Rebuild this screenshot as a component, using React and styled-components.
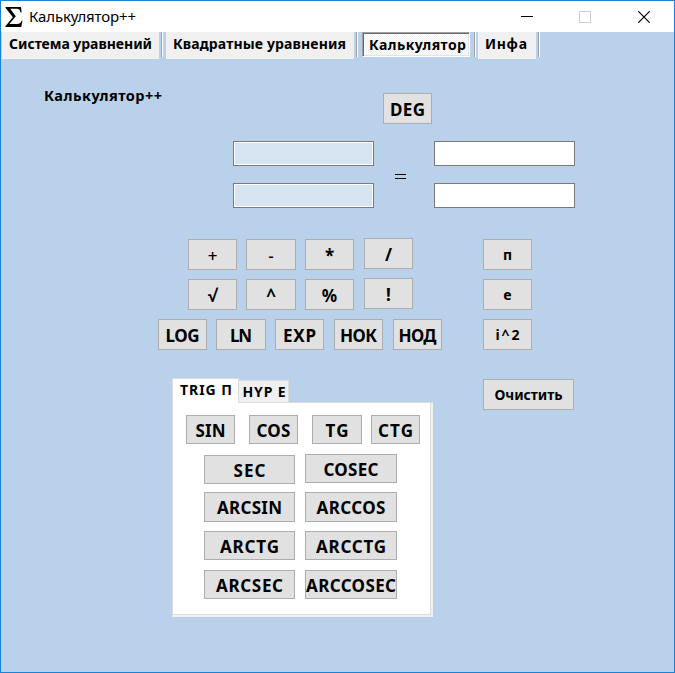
import React, { useLayoutEffect, useRef } from "react";
import styled, { createGlobalStyle, css } from "styled-components";

const GlobalStyle = createGlobalStyle`
  * { box-sizing: border-box; }
  html, body { margin: 0; padding: 0; }
  body { font-family: "Noto Sans", "Open Sans", sans-serif; color: #000; }
  button { font-family: inherit; color: inherit; }
`;

const Window = styled.div`
  width: 675px;
  height: 673px;
  display: flex;
  flex-direction: column;
  border: 1px solid #1883d7;
  background: #b9d1ea;
  overflow: hidden;
`;

const TitleBar = styled.header`
  flex: none;
  height: 31px;
  display: flex;
  align-items: center;
  padding-left: 4px;
  background: #fff;
`;

const Title = styled.div`
  flex: 1;
  display: flex;
  margin-left: 6px;
  font-size: 15px;
  line-height: 20px;
  padding-bottom: 1px;
`;

const WindowButton = styled.div`
  width: ${(p) => p.$w || 58}px;
  height: 30px;
  display: flex;
  align-items: center;
  justify-content: center;
`;

const TabStrip = styled.nav`
  flex: none;
  height: 27px;
  display: flex;
  align-items: flex-start;
  padding-left: 1px;
`;

const Tab = styled.div`
  width: ${(p) => p.$w}px;
  height: 27px;
  display: flex;
  padding-left: 7px;
  background: #f0f0f0;
  font-size: 14px;
  font-weight: 700;
  line-height: 23px;
  ${(p) =>
    p.$active &&
    css`
      height: 25px;
      padding-left: 6px;
      line-height: 23px;
      border: 1px solid;
      border-color: #a0a0a0 #fff #fff #a0a0a0;
      box-shadow: inset 1px 1px #696969, inset -1px -1px #e3e3e3;
      background: repeating-conic-gradient(#fff 0 25%, #f0f0f0 0 50%) 0 0 / 2px 2px;
    `}
`;

const Separator = styled.div`
  width: 2px;
  height: 25px;
  margin: 0 ${(p) => p.$after}px 0 ${(p) => p.$before}px;
  border-left: 1px solid #a0a0a0;
  border-right: 1px solid #fff;
`;

const FitText = styled.span`
  display: inline-block;
  white-space: pre;
`;

const Content = styled.main`
  flex: 1;
  display: flex;
  flex-direction: column;
`;

const Header = styled.section`
  display: flex;
  height: 82px;
`;

const Heading = styled.h1`
  width: 339px;
  margin: 26px 0 0 43px;
  font-size: 14.5px;
  line-height: 20px;
  font-weight: 700;
`;

const Fields = styled.section`
  display: grid;
  grid-template-columns: 141px 60px 141px;
  grid-template-rows: 25px 25px;
  row-gap: 17px;
  padding-left: 232px;
`;

const Field = styled.input`
  width: 141px;
  height: 25px;
  padding: 1px;
  border: 1px solid #7a7a7a;
  border-radius: 0;
  outline: 0;
  background: #fff;
  &:disabled {
    background: #d7e4f2;
    box-shadow: inset 0 0 0 1px #fff;
  }
`;

const Equals = styled.div`
  grid-column: 2;
  grid-row: 1 / 3;
  display: flex;
  align-items: center;
  padding: 4px 0 0 21px;
`;

const Key = styled.button`
  flex: none;
  width: ${(p) => p.$w || 49}px;
  height: ${(p) => p.$h || 31}px;
  margin: ${(p) => p.$top || 0}px 0 0;
  padding: ${(p) => (p.$size ? 0 : 2)}px 0 0;
  display: flex;
  align-items: center;
  justify-content: center;
  border: 1px solid #adadad;
  background: #e1e1e1;
  font-size: ${(p) => p.$size || 17}px;
  line-height: 20px;
  font-weight: ${(p) => p.$weight || 700};
`;

const Keypad = styled.section`
  display: flex;
  flex-direction: column;
  gap: 9px;
  height: 140px;
  margin-top: 31px;
`;

const KeyRow = styled.div`
  display: flex;
  align-items: flex-start;
  height: 31px;
  padding-left: ${(p) => p.$left}px;
`;

const Gap = styled.div`
  flex: none;
  width: ${(p) => p.$w}px;
`;

const Lower = styled.section`
  display: flex;
  align-items: flex-start;
  gap: 50px;
  margin: -1px 0 0 171px;
`;

const TrigGroup = styled.div`
  width: 261px;
`;

const GroupTabs = styled.div`
  display: flex;
  align-items: flex-end;
  height: 24px;
`;

const GroupTab = styled.div`
  width: ${(p) => (p.$active ? 67 : 50)}px;
  height: ${(p) => (p.$active ? 25 : 22)}px;
  margin-bottom: ${(p) => (p.$active ? -1 : 0)}px;
  position: relative;
  display: flex;
  justify-content: ${(p) => (p.$active ? "flex-start" : "center")};
  padding-left: ${(p) => (p.$active ? 7 : 1)}px;
  border: 1px solid #dcdcdc;
  border-bottom: 0;
  border-left-width: ${(p) => (p.$active ? 1 : 0)}px;
  background: ${(p) => (p.$active ? "#fff" : "#f0f0f0")};
  font-size: 14px;
  font-weight: 700;
  line-height: ${(p) => (p.$active ? 22 : 22)}px;
`;

const GroupPanel = styled.div`
  width: 261px;
  height: 215px;
  border: 1px solid;
  border-color: #dcdcdc #f0f0f0 #f0f0f0 #dcdcdc;
  background: #fff;
  padding: 12px 0 0 13px;
  box-shadow: inset -1px -1px #f0f0f0, inset -2px -2px #dcdcdc;
`;

const TrigRow = styled.div`
  display: flex;
  align-items: flex-start;
  height: ${(p) => p.$h}px;
  padding-left: ${(p) => p.$left || 0}px;
`;

/* Adjusts tracking so the label occupies the given width. */
function Fit({ text, width }) {
  const ref = useRef(null);
  useLayoutEffect(() => {
    const el = ref.current;
    el.style.letterSpacing = "0px";
    el.style.marginRight = "0px";
    const natural = el.getBoundingClientRect().width;
    const spacing = width ? (width - natural) / Math.max(1, text.length - 1) : 0;
    el.style.letterSpacing = `${spacing}px`;
    el.style.marginRight = `${-spacing}px`;
  }, [text, width]);
  return <FitText ref={ref}>{text}</FitText>;
}

const Cap = ({ text, fit, w, h, top, size, weight }) => (
  <Key type="button" $w={w} $h={h} $top={top} $size={size} $weight={weight}>
    <Fit text={text} width={fit} />
  </Key>
);

const SigmaIcon = () => (
  <svg width="18" height="22" viewBox="0 0 18 22">
    <path
      d="M.5 1H16l.6 5.5h-1C15 3.8 14 2.8 11.800 2.800H5.200l5.600 7.500-6.400 7.700h7.600c2.500 0 3.700-1 4.600-3.300h.9L16.200 21H.4v-.8l7.400-8.900L.5 1.800z"
      fill="#000"
    />
  </svg>
);

export default function App() {
  return (
    <>
      <GlobalStyle />
      <Window>
        <TitleBar>
          <SigmaIcon />
          <Title>
            <Fit text="Калькулятор++" width={107} />
          </Title>
          <WindowButton>
            <svg width="12" height="12" shapeRendering="crispEdges">
              <path d="M0 5.500h12" stroke="#000" />
            </svg>
          </WindowButton>
          <WindowButton>
            <svg width="12" height="12" shapeRendering="crispEdges">
              <rect x=".5" y=".5" width="11" height="11" fill="none" stroke="#ccc" />
            </svg>
          </WindowButton>
          <WindowButton $w={60}>
            <svg width="12" height="12">
              <path d="M.3.3l11.400 11.400M11.700.3L.3 11.700" stroke="#000" strokeWidth="1.200" />
            </svg>
          </WindowButton>
        </TitleBar>
        <TabStrip>
          <Tab $w={157}><Fit text="Система уравнений" width={143} /></Tab>
          <Separator $before={2} $after={3} />
          <Tab $w={188}><Fit text="Квадратные уравнения" width={173} /></Tab>
          <Separator $before={2} $after={4} />
          <Tab $w={108} $active><Fit text="Калькулятор" width={97} /></Tab>
          <Separator $before={4} $after={2} />
          <Tab $w={58}><Fit text="Инфа" width={42} /></Tab>
          <Separator $before={2} $after={0} />
        </TabStrip>
        <Content>
          <Header>
            <Heading><Fit text="Калькулятор++" width={118} /></Heading>
            <Cap text="DEG" fit={35} top={34} />
          </Header>
          <Fields>
            <Field disabled />
            <Equals>
              <svg width="11" height="5" shapeRendering="crispEdges">
                <path d="M0 .5h11M0 4.500h11" stroke="#000" />
              </svg>
            </Equals>
            <Field />
            <Field disabled />
            <Field />
          </Fields>
          <Keypad>
            <KeyRow $left={187}>
              <Cap text="+" weight={500} /><Gap $w={9} />
              <Cap text="-" w={50} weight={500} /><Gap $w={9} />
              <Cap text="*" /><Gap $w={10} />
              <Cap text="/" top={-1} /><Gap $w={70} />
              <Cap text="п" size={14} />
            </KeyRow>
            <KeyRow $left={187}>
              <Cap text="√" /><Gap $w={9} />
              <Cap text="^" w={50} /><Gap $w={9} />
              <Cap text="%" fit={18} /><Gap $w={10} />
              <Cap text="!" top={-1} /><Gap $w={70} />
              <Cap text="e" size={14} />
            </KeyRow>
            <KeyRow $left={157}>
              <Cap text="LOG" fit={34} /><Gap $w={9} />
              <Cap text="LN" w={50} fit={22} /><Gap $w={9} />
              <Cap text="EXP" fit={33} /><Gap $w={10} />
              <Cap text="НОК" fit={37} /><Gap $w={10} />
              <Cap text="НОД" fit={38} /><Gap $w={41} />
              <Cap text="i^2" fit={24} size={14} />
            </KeyRow>
          </Keypad>
          <Lower>
            <TrigGroup>
              <GroupTabs>
                <GroupTab $active><Fit text="TRIG П" width={52} /></GroupTab>
                <GroupTab><Fit text="HYP E" width={43} /></GroupTab>
              </GroupTabs>
              <GroupPanel>
                <TrigRow $h={40}>
                  <Cap text="SIN" h={29} fit={30} /><Gap $w={14} />
                  <Cap text="COS" h={29} fit={34} /><Gap $w={14} />
                  <Cap text="TG" w={50} h={29} fit={23} /><Gap $w={9} />
                  <Cap text="CTG" h={29} fit={35} />
                </TrigRow>
                <TrigRow $h={37} $left={18}>
                  <Cap text="SEC" w={91} h={29} fit={32} /><Gap $w={10} />
                  <Cap text="COSEC" w={92} h={29} top={-1} fit={55} />
                </TrigRow>
                <TrigRow $h={39} $left={18}>
                  <Cap text="ARCSIN" w={91} h={30} fit={65} /><Gap $w={10} />
                  <Cap text="ARCCOS" w={92} h={30} fit={69} />
                </TrigRow>
                <TrigRow $h={39} $left={18}>
                  <Cap text="ARCTG" w={91} h={29} fit={59} /><Gap $w={10} />
                  <Cap text="ARCCTG" w={92} h={29} fit={70} />
                </TrigRow>
                <TrigRow $h={39} $left={18}>
                  <Cap text="ARCSEC" w={91} h={29} fit={67} /><Gap $w={10} />
                  <Cap text="ARCCOSEC" w={92} h={29} fit={90} />
                </TrigRow>
              </GroupPanel>
            </TrigGroup>
            <Cap text="Очистить" w={91} top={1} fit={68} size={14} />
          </Lower>
        </Content>
      </Window>
    </>
  );
}
